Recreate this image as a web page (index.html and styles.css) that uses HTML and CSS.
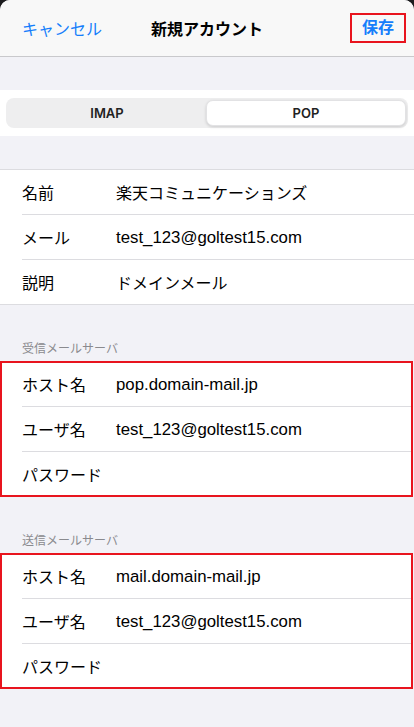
FILE: index.html
```html
<!DOCTYPE html>
<html lang="ja">
<head>
    <meta charset="UTF-8">
    <meta name="viewport" content="width=device-width, initial-scale=1.0">
    <title>新規アカウント</title>
    <link rel="stylesheet" href="styles.css">
</head>
<body>

<div class="sheet">
    <div class="navbar">
        <span class="nav-cancel">キャンセル</span>
        <span class="nav-title">新規アカウント</span>
        <span class="nav-save"><span class="save-box">保存</span></span>
    </div>

    <div class="gap"></div>

    <div class="seg-band">
        <div class="segmented">
            <div class="segment">IMAP</div>
            <div class="segment active">POP</div>
        </div>
    </div>

    <div class="gap"></div>

    <div class="group">
        <div class="row"><span class="label">名前</span><span class="value">楽天コミュニケーションズ</span></div>
        <div class="row"><span class="label">メール</span><span class="value latin">test_123@goltest15.com</span></div>
        <div class="row"><span class="label">説明</span><span class="value">ドメインメール</span></div>
    </div>

    <div class="section-header">受信メールサーバ</div>
    <div class="group marked">
        <div class="row"><span class="label">ホスト名</span><span class="value latin">pop.domain-mail.jp</span></div>
        <div class="row"><span class="label">ユーザ名</span><span class="value latin">test_123@goltest15.com</span></div>
        <div class="row"><span class="label">パスワード</span><span class="value"></span></div>
    </div>

    <div class="section-header">送信メールサーバ</div>
    <div class="group marked">
        <div class="row"><span class="label">ホスト名</span><span class="value latin">mail.domain-mail.jp</span></div>
        <div class="row"><span class="label">ユーザ名</span><span class="value latin">test_123@goltest15.com</span></div>
        <div class="row"><span class="label">パスワード</span><span class="value"></span></div>
    </div>
</div>

</body>
</html>
```

FILE: styles.css
```css
body {
    margin: 0;
    background-color: #1c1c1e;
    font-family: "Liberation Sans", "Noto Sans CJK JP", sans-serif;
    color: #000;
}
.sheet {
    min-height: 727px;
    background-color: #f2f2f7;
    border-radius: 10px 10px 0 0;
    overflow: hidden;
}
.navbar {
    display: grid;
    grid-template-columns: 1fr auto 1fr;
    align-items: center;
    height: 56px;
    background-color: #f8f8f8;
    border-bottom: 1px solid #c9c9cc;
}
.nav-cancel {
    padding-left: 22px;
    font-size: 16px;
    color: #157efb;
}
.nav-title {
    font-size: 16px;
    font-weight: bold;
}
.nav-save {
    justify-self: end;
    margin-right: 8px;
}
.save-box {
    display: block;
    padding: 0 10px;
    line-height: 26px;
    font-size: 16px;
    font-weight: bold;
    color: #157efb;
    border: 2px solid #e8141e;
}
.gap {
    height: 33px;
}
.seg-band {
    background-color: #fff;
    padding: 8px 6px;
}
.segmented {
    display: flex;
    height: 30px;
    padding: 2px;
    box-sizing: border-box;
    background-color: #eeeeef;
    border-radius: 8px;
}
.segment {
    flex: 1;
    display: flex;
    align-items: center;
    justify-content: center;
    font-family: Inter, "Liberation Sans", sans-serif;
    font-size: 13px;
    font-weight: 600;
    color: #222;
    border-radius: 7px;
}
.segment.active {
    background-color: #fff;
    box-shadow: 0 1px 3px rgba(0, 0, 0, 0.15);
    border: 1px solid #e2e2e4;
}
.group {
    background-color: #fff;
    border-top: 1px solid #dcdce0;
    border-bottom: 1px solid #dcdce0;
    padding-left: 22px;
}
.group.marked {
    outline: 2px solid #e8141e;
    outline-offset: -2px;
    margin-right: 1px;
}
.row {
    display: flex;
    align-items: center;
    height: 45px;
    border-bottom: 1px solid #dcdce0;
    box-sizing: border-box;
}
.row:last-child {
    border-bottom: none;
    height: 44px;
}
.label {
    width: 94px;
    font-size: 16px;
}
.value {
    font-size: 16px;
}
.value.latin {
    font-size: 16.8px;
    padding-top: 2px;
}
.section-header {
    padding: 36px 22px 4px;
    line-height: 16px;
    font-size: 12px;
    color: #8a8a8e;
}
```
